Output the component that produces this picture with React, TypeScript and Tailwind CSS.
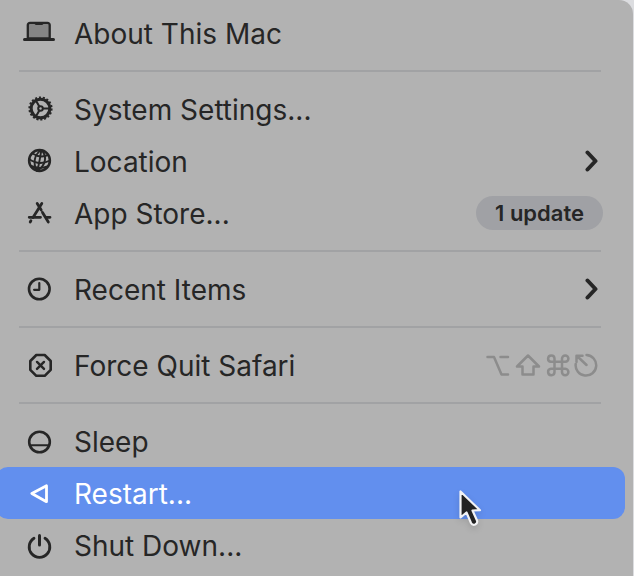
import type { ReactNode } from "react";

function Icon({ children }: { children: ReactNode }) {
  return (
    <svg
      viewBox="0 0 32 32"
      className="size-8 shrink-0"
      fill="none"
      stroke="currentColor"
      strokeWidth="2.8"
      strokeLinecap="round"
      strokeLinejoin="round"
      aria-hidden="true"
    >
      {children}
    </svg>
  );
}

function LaptopIcon() {
  return (
    <Icon>
      <path
        d="M4.8 21.5V8a2.2 2.2 0 0 1 2.2-2.2h17.500A2.2 2.2 0 0 1 26.700 8v13.500z"
        fill="#858585"
        strokeWidth="2.3"
      />
      <path d="M13 6.500h6" strokeWidth="2.800" />
      <path d="M1.500 22.500h29" strokeWidth="3" />
    </Icon>
  );
}

function GearIcon() {
  return (
    <Icon>
      <circle cx="17.500" cy="15.500" r="9.300" strokeWidth="3" />
      <circle
        cx="17.500"
        cy="15.500"
        r="11.200"
        strokeWidth="1.800"
        strokeLinecap="butt"
        strokeDasharray="2.100 1.810"
      />
      <circle cx="17.500" cy="15.500" r="2.300" strokeWidth="2" />
      <path d="M20 15.500h7M16.200 13.300 12.700 7.300M16.200 17.700l-3.500 6" strokeWidth="2.100" />
    </Icon>
  );
}

function GlobeIcon() {
  return (
    <Icon>
      <circle cx="16.500" cy="15.500" r="10.400" strokeWidth="2.500" />
      <g strokeWidth="1.900">
        <path d="M18.500 5c-7 4-9 13-4.500 21M18.500 5c5.500 6 5 15-4.500 21M18.500 5c-1.500 6-2 14-4.500 21" />
        <path d="M9 8.200c5 3.300 11 4 16 2M6 14c6 4.300 14 5 21 1.500M8 21c5 2 11.500 2.300 16.500.500" />
      </g>
    </Icon>
  );
}

function AppStoreIcon() {
  return (
    <Icon>
      <path d="m14.200 6.500 4 6.500M19.500 15.500 25.300 25" />
      <path d="M18.800 6.500 10 20.500M7.900 23.800l-.700 1.200" />
      <path d="M6.200 20.300h11.300M23.500 20.300h3.500" />
    </Icon>
  );
}

function ClockIcon() {
  return (
    <Icon>
      <circle cx="16.300" cy="16" r="10.300" strokeWidth="2.600" />
      <path d="M16.300 10v6.800h-5.200" strokeWidth="2.200" />
    </Icon>
  );
}

function ForceQuitIcon() {
  return (
    <Icon>
      <path d="M13.300 6h8.400l6 6v8.800l-6 6h-8.400l-6-6V12z" strokeWidth="2.600" />
      <path d="m14 12.900 7 7M21 12.900l-7 7" strokeWidth="2.400" />
    </Icon>
  );
}

function SleepIcon() {
  return (
    <Icon>
      <circle cx="16.500" cy="17" r="10.300" strokeWidth="2.600" />
      <path d="M6.800 20.300h19.400" strokeWidth="2.100" />
    </Icon>
  );
}

function RestartIcon() {
  return (
    <Icon>
      <path d="M8.800 16.500 23.500 8.800v15.900z" />
    </Icon>
  );
}

function PowerIcon() {
  return (
    <Icon>
      <path d="M11 9.300a10.300 10.300 0 1 0 11 0" />
      <path d="M16.500 6.500v9.500" strokeWidth="3" />
    </Icon>
  );
}

function Chevron() {
  return (
    <svg
      viewBox="0 0 14 24"
      className="mr-[5px] h-6 w-[14px]"
      fill="none"
      stroke="currentColor"
      strokeWidth="4"
      strokeLinecap="round"
      strokeLinejoin="round"
      aria-hidden="true"
    >
      <path d="m3.500 3.500 8 8.500-8 8.500" />
    </svg>
  );
}

function Shortcut() {
  return (
    <svg
      viewBox="0 0 114 24"
      className="mr-1 h-6 w-[114px] text-[#8c8c8c]"
      fill="none"
      stroke="currentColor"
      strokeWidth="2.500"
      strokeLinecap="round"
      strokeLinejoin="round"
      role="img"
      aria-label="Option Shift Command Power"
    >
      <path d="M2.500 4H9l7.500 17.500H23M15.500 4H23" />
      <path d="M43 2.500 32 13.500h5.500v8h11v-8H54z" />
      <path d="M69.500 8.800h7.500v7h-7.500zM69.500 8.800H66a3.200 3.200 0 1 1 3.500-3.300zM77 8.800h3.300A3.200 3.200 0 1 0 77 5.500zM69.500 15.800H66a3.200 3.200 0 1 0 3.500 3.200zM77 15.800h3.300A3.200 3.200 0 1 1 77 19z" />
      <path d="M101.500 2a10.300 10.300 0 1 1-10.800 9M92 3l9.500 9M91.500 9V2.700h6" />
    </svg>
  );
}

function Cursor() {
  return (
    <svg
      viewBox="0 0 32 46"
      className="pointer-events-none absolute top-[20px] left-[462px] h-[46px] w-8 drop-shadow-md"
      aria-hidden="true"
    >
      <path
        d="M2.500 4.500v26l6-5 4.500 10.500q1.500 2.500 4.200 1.500 2.700-1.300 1.800-4L14.500 23.500l7.500-.300z"
        fill="#222222"
        stroke="#f2f2f4"
        strokeWidth="2.200"
        strokeLinejoin="round"
      />
    </svg>
  );
}

type ItemProps = {
  icon: ReactNode;
  label: string;
  active?: boolean;
  children?: ReactNode;
};

function MenuItem({ icon, label, active, children }: ItemProps) {
  return (
    <li role="none" className="relative -ml-1 mr-2">
      <button
        type="button"
        role="menuitem"
        className={
          active
            ? "flex h-[52px] w-full items-center gap-[19px] rounded-xl bg-[#628fee] pr-[22px] pl-[27px] text-white"
            : "flex h-[52px] w-full items-center gap-[19px] rounded-xl pr-[22px] pl-[27px]"
        }
      >
        {icon}
        <span className="flex-1 pt-[2px] text-left whitespace-nowrap">{label}</span>
        {children}
      </button>
      {active && <Cursor />}
    </li>
  );
}

function Separator() {
  return (
    <li role="separator" className="mr-8 ml-[19px] flex h-6 items-center">
      <span className="h-[2px] w-full bg-[#a1a2a4]" />
    </li>
  );
}

export default function App() {
  return (
    <main className="min-h-screen overflow-hidden bg-[#dcdde0] font-['Inter',sans-serif] text-[28px] leading-8 text-[#262626]">
      <ul
        role="menu"
        aria-label="Apple menu"
        className="mr-px min-h-screen rounded-tr-[14px] bg-[#b2b2b2] pt-[7px]"
      >
        <MenuItem icon={<LaptopIcon />} label="About This Mac" />
        <Separator />
        <MenuItem icon={<GearIcon />} label="System Settings..." />
        <MenuItem icon={<GlobeIcon />} label="Location">
          <Chevron />
        </MenuItem>
        <MenuItem icon={<AppStoreIcon />} label="App Store...">
          <span className="rounded-full bg-[#a0a1a5] px-[19px] py-[5px] text-[22px] leading-6 font-semibold">
            1 update
          </span>
        </MenuItem>
        <Separator />
        <MenuItem icon={<ClockIcon />} label="Recent Items">
          <Chevron />
        </MenuItem>
        <Separator />
        <MenuItem icon={<ForceQuitIcon />} label="Force Quit Safari">
          <Shortcut />
        </MenuItem>
        <Separator />
        <MenuItem icon={<SleepIcon />} label="Sleep" />
        <MenuItem icon={<RestartIcon />} label="Restart..." active />
        <MenuItem icon={<PowerIcon />} label="Shut Down..." />
      </ul>
    </main>
  );
}
